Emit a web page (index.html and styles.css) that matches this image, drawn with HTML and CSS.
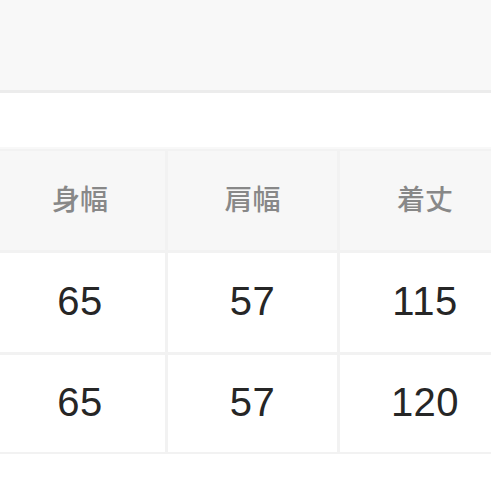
FILE: index.html
```html
<!DOCTYPE html>
<html lang="ja">
<head>
<meta charset="utf-8">
<link rel="stylesheet" href="styles.css">
</head>
<body>
<div class="topband"></div>
<div class="spacer"></div>
<div class="table">
  <div class="cell head">身幅</div>
  <div class="cell head">肩幅</div>
  <div class="cell head">着丈</div>
  <div class="cell num">65</div>
  <div class="cell num">57</div>
  <div class="cell num">115</div>
  <div class="cell num">65</div>
  <div class="cell num">57</div>
  <div class="cell num">120</div>
</div>
</body>
</html>
```
FILE: styles.css
```css
html, body {
  margin: 0;
  padding: 0;
  background: #ffffff;
  overflow: hidden;
}
.topband {
  height: 90px;
  background: #f8f8f8;
  border-bottom: 3px solid #ececec;
}
.spacer {
  height: 54px;
  border-bottom: 2px solid #f8f8f8;
}
.table {
  display: grid;
  grid-template-columns: 170px 169px 170px;
  grid-template-rows: 99px 99px 97px;
  gap: 3px;
  background: #f2f2f2;
  padding: 2px 0;
  margin-left: -5px;
  width: 515px;
}
.cell {
  display: flex;
  align-items: center;
  justify-content: center;
  background: #ffffff;
}
.head {
  background: #f7f7f7;
  color: #888888;
  font-family: "Noto Sans CJK JP", "Noto Sans", sans-serif;
  font-size: 28px;
  font-weight: 500;
  padding-bottom: 5px;
}
.num {
  color: #262626;
  font-family: "Liberation Sans", Arial, sans-serif;
  font-size: 40px;
  padding-bottom: 3px;
  letter-spacing: 0.5px;
}
```
